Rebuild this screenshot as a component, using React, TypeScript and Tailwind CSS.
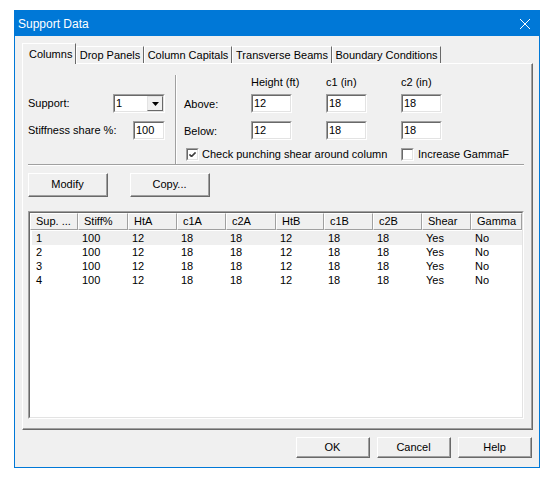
import React from "react";

const cols = [
  { h: "Sup. ...", w: 48 },
  { h: "Stiff%", w: 50 },
  { h: "HtA", w: 49 },
  { h: "c1A", w: 49 },
  { h: "c2A", w: 50 },
  { h: "HtB", w: 48 },
  { h: "c1B", w: 49 },
  { h: "c2B", w: 49 },
  { h: "Shear", w: 49 },
  { h: "Gamma", w: 51 },
];

const rows = [
  ["1", "100", "12", "18", "18", "12", "18", "18", "Yes", "No"],
  ["2", "100", "12", "18", "18", "12", "18", "18", "Yes", "No"],
  ["3", "100", "12", "18", "18", "12", "18", "18", "Yes", "No"],
  ["4", "100", "12", "18", "18", "12", "18", "18", "Yes", "No"],
];

const tabs = [
  { t: "Drop Panels", w: 68 },
  { t: "Column Capitals", w: 88 },
  { t: "Transverse Beams", w: 100 },
  { t: "Boundary Conditions", w: 109 },
];

function Sunken({ className, children }: { className?: string; children?: React.ReactNode }) {
  return (
    <div className={`border-t border-l border-[#a0a0a0] border-r border-b border-r-white border-b-white ${className ?? ""}`}>
      <div className="h-full w-full border-t border-l border-[#696969] border-r border-b border-r-[#e3e3e3] border-b-[#e3e3e3] bg-white">
        {children}
      </div>
    </div>
  );
}

function Edit({ value, className }: { value: string; className?: string }) {
  return (
    <Sunken className={`h-[19px] ${className ?? ""}`}>
      <div className="flex h-full items-center pl-[1px] leading-none">{value}</div>
    </Sunken>
  );
}

function Button({ label, className }: { label: string; className?: string }) {
  return (
    <div className={`border-t border-l border-white border-r border-b border-r-[#696969] border-b-[#696969] ${className ?? ""}`}>
      <div className="flex h-full w-full items-center justify-center border-r border-b border-r-[#a0a0a0] border-b-[#a0a0a0] bg-[#f0f0f0]">
        {label}
      </div>
    </div>
  );
}

function Check({ on }: { on?: boolean }) {
  return (
    <Sunken className="h-[13px] w-[13px] shrink-0">
      {on && (
        <svg viewBox="0 0 9 9" className="h-[9px] w-[9px]">
          <path d="M1.5 4 L3.5 6 L7.5 2 M1.5 5 L3.5 7 L7.5 3" stroke="#000" strokeWidth="1" fill="none" />
        </svg>
      )}
    </Sunken>
  );
}

export default function App() {
  return (
    <div className="h-[479px] w-[552px] bg-white pl-[14px] pt-[10px] font-['Liberation_Sans',Arial,sans-serif] text-[11px] text-black">
      <div className="flex h-[458px] w-[526px] flex-col border border-[#0078d7] bg-[#f0f0f0]">
        {/* title bar */}
        <div className="flex h-[25px] shrink-0 items-center justify-between bg-[#0078d7] pl-[3px] pr-[9px] text-[12px] text-white">
          <span>Support Data</span>
          <svg viewBox="0 0 10 10" className="h-[10px] w-[10px]">
            <path d="M0 0 L10 10 M10 0 L0 10" stroke="#fff" strokeWidth="1" />
          </svg>
        </div>

        <div className="flex flex-1 flex-col px-[7px] pt-[7px]">
          {/* tabs */}
          <div className="relative z-10 flex h-[20px] items-end">
            <div className="flex h-[21px] w-[54px] items-center border-t border-l border-white border-r border-r-[#696969] bg-[#f0f0f0] pl-[6px] -mb-[1px]">
              Columns
            </div>
            {tabs.map((t) => (
              <div
                key={t.t}
                style={{ width: t.w }}
                className="flex h-[17px] items-center justify-center border-t border-l border-white border-r border-r-[#696969]"
              >
                {t.t}
              </div>
            ))}
          </div>

          {/* panel */}
          <div className="h-[367px] w-[511px] border-t border-l border-white border-r border-b border-r-[#696969] border-b-[#696969]">
            <div className="flex h-full flex-col border-r border-b border-r-[#a0a0a0] border-b-[#a0a0a0]">
              {/* top section */}
              <div className="flex h-[100px]">
                <div className="w-[152px] pl-[5px] pt-[30px]">
                  <div className="flex h-[19px] items-center">
                    <span className="w-[85px]">Support:</span>
                    <Sunken className="h-[19px] w-[52px]">
                      <div className="flex h-full items-center justify-between">
                        <span className="pl-[1px]">1</span>
                        <div className="flex h-full w-[16px] items-center justify-center border-t border-l border-[#e3e3e3] border-r border-b border-r-[#696969] border-b-[#696969] bg-[#f0f0f0]">
                          <svg viewBox="0 0 7 4" className="h-[4px] w-[7px]">
                            <path d="M0 0 H7 L3.5 4 Z" fill="#000" />
                          </svg>
                        </div>
                      </div>
                    </Sunken>
                  </div>
                  <div className="mt-[8px] flex h-[19px] items-center">
                    <span className="w-[105px]">Stiffness share %:</span>
                    <Edit value="100" className="w-[32px]" />
                  </div>
                </div>

                <div className="mt-[11px] flex border-l border-[#a0a0a0]">
                  <div className="border-l border-white pl-[7px]">
                    <div className="flex h-[14px] items-center">
                      <span className="w-[67px]" />
                      <span className="w-[75px]">Height (ft)</span>
                      <span className="w-[75px]">c1 (in)</span>
                      <span>c2 (in)</span>
                    </div>
                    <div className="mt-[5px] flex h-[19px] items-center">
                      <span className="w-[67px] pt-[2px]">Above:</span>
                      <Edit value="12" className="w-[41px]" />
                      <Edit value="18" className="ml-[34px] w-[41px]" />
                      <Edit value="18" className="ml-[34px] w-[41px]" />
                    </div>
                    <div className="mt-[8px] flex h-[19px] items-center">
                      <span className="w-[67px] pt-[2px]">Below:</span>
                      <Edit value="12" className="w-[41px]" />
                      <Edit value="18" className="ml-[34px] w-[41px]" />
                      <Edit value="18" className="ml-[34px] w-[41px]" />
                    </div>
                    <div className="mt-[8px] flex h-[13px] items-center">
                      <div className="ml-[2px] w-[16px] shrink-0">
                        <Check on />
                      </div>
                      <span className="w-[199px] shrink-0 whitespace-nowrap">Check punching shear around column</span>
                      <div className="w-[17px] shrink-0">
                        <Check />
                      </div>
                      <span className="whitespace-nowrap">Increase GammaF</span>
                    </div>
                  </div>
                </div>
              </div>

              {/* separator */}
              <div className="ml-[5px] mr-[7px] border-t border-[#a0a0a0] border-b border-b-white" />

              {/* buttons */}
              <div className="mt-[7px] flex gap-[22px] pl-[5px]">
                <Button label="Modify" className="h-[24px] w-[80px]" />
                <Button label="Copy..." className="h-[24px] w-[80px]" />
              </div>

              {/* list */}
              <Sunken className="ml-[5px] mt-[14px] h-[208px] w-[496px]">
                <div className="flex h-[17px]">
                  {cols.map((c) => (
                    <div
                      key={c.h}
                      style={{ width: c.w }}
                      className="flex h-full shrink-0 items-center border-t border-l border-white border-r border-b border-r-[#a0a0a0] border-b-[#a0a0a0] bg-[#f0f0f0] pl-[5px]"
                    >
                      {c.h}
                    </div>
                  ))}
                </div>
                <div className="pt-[1px]">
                  {rows.map((r, i) => (
                    <div key={i} className={`ml-[2px] flex h-[14px] items-center ${i === 0 ? "bg-[#efefef]" : ""}`}>
                      {r.map((v, j) => (
                        <div key={j} style={{ width: j === 0 ? cols[j].w - 2 : cols[j].w }} className="shrink-0 pl-[4px] leading-none">
                          {v}
                        </div>
                      ))}
                    </div>
                  ))}
                </div>
              </Sunken>
            </div>
          </div>

          {/* dialog buttons */}
          <div className="mt-[7px] flex justify-end gap-[7px]">
            <Button label="OK" className="h-[21px] w-[74px]" />
            <Button label="Cancel" className="h-[21px] w-[74px]" />
            <Button label="Help" className="h-[21px] w-[74px]" />
          </div>
        </div>
      </div>
    </div>
  );
}
